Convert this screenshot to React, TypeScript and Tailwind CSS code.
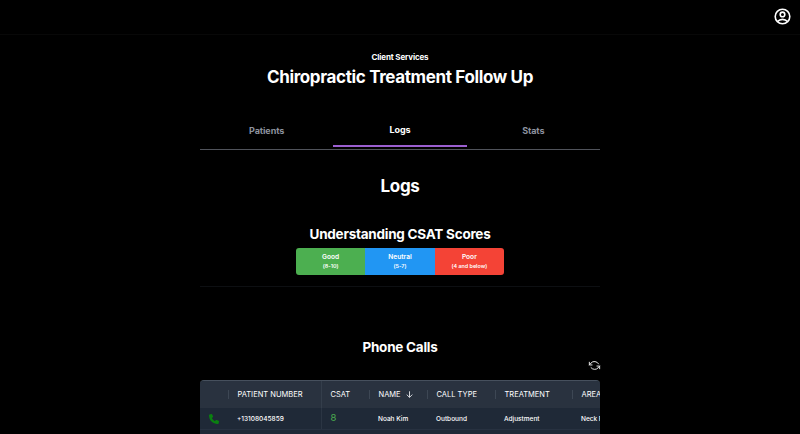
import React from "react";

const columns = [
  { label: "", value: "", width: "w-[28px]" },
  { label: "PATIENT NUMBER", value: "+13108045859", width: "w-[93px]" },
  { label: "CSAT", value: "8", width: "w-[48px]" },
  { label: "NAME", value: "Noah Kim", width: "w-[58px]" },
  { label: "CALL TYPE", value: "Outbound", width: "w-[68px]" },
  { label: "TREATMENT", value: "Adjustment", width: "w-[77px]" },
  { label: "AREA", value: "Neck Pain", width: "w-[80px]" },
];

const scores = [
  { name: "Good", range: "(8-10)", color: "bg-[#4caf50]" },
  { name: "Neutral", range: "(5-7)", color: "bg-[#2196f3]" },
  { name: "Poor", range: "(4 and below)", color: "bg-[#f44336]" },
];

function UserIcon() {
  return (
    <svg className="h-[18px] w-[18px]" viewBox="0 0 18 18" fill="none" stroke="white" strokeWidth="1.6">
      <circle cx="8.5" cy="9.5" r="7.3" />
      <circle cx="8.5" cy="7.4" r="2.3" />
      <path d="M3.6 14.6C4.8 13.1 6.6 12.4 8.5 12.4s3.7.7 4.9 2.2" />
    </svg>
  );
}

function RefreshIcon() {
  return (
    <svg className="h-[13px] w-[13px]" viewBox="0 0 24 24" fill="none" stroke="#e8e8e8" strokeWidth="1.8" strokeLinecap="round" strokeLinejoin="round">
      <path d="M2.5 6v5h5M21.500 18v-5h-5" />
      <path d="M2.500 11l3-3.500a8.500 8.500 0 0 1 14 1.500M21.500 13l-3 3.500a8.500 8.500 0 0 1-13-.5" />
    </svg>
  );
}

export default function App() {
  return (
    <div className="h-[434px] w-[800px] overflow-hidden bg-black font-['Inter',sans-serif] text-white">
      <header className="flex h-[35px] items-start justify-end border-b border-[#080808] pt-[7px] pr-[8px]">
        <UserIcon />
      </header>
      <main className="mx-auto flex w-[400px] flex-col">
        <p className="mt-[17px] text-center text-[8px] leading-[10px] font-bold tracking-[-0.15px]">Client Services</p>
        <h1 className="mt-[5px] text-center text-[17px] leading-[20px] font-bold tracking-[-0.36px] whitespace-nowrap">
          Chiropractic Treatment Follow Up
        </h1>
        <nav className="mt-[27px] grid h-[36px] grid-cols-3 border-b border-[#50535b] text-center text-[9px] leading-[12px] font-bold tracking-[-0.08px]">
          <span className="pt-[11px] text-[#8d929e]">Patients</span>
          <span className="mb-[2px] border-b-2 border-[#9b5fd0] pt-[10px]">Logs</span>
          <span className="pt-[11px] text-[#8d929e]">Stats</span>
        </nav>
        <h2 className="mt-[26px] text-center text-[17px] leading-[20px] font-bold tracking-[-0.36px]">Logs</h2>
        <h3 className="mt-[30px] text-center text-[13.5px] leading-[17px] font-bold tracking-[-0.24px]">
          Understanding CSAT Scores
        </h3>
        <div className="mx-auto mt-[5px] grid h-[27px] w-[208px] grid-cols-3 overflow-hidden rounded-[3px] text-center">
          {scores.map((s) => (
            <div key={s.name} className={`${s.color} pt-[5px]`}>
              <div className="text-[6.6px] leading-[8px] font-semibold">{s.name}</div>
              <div className="mt-[1px] text-[5.4px] leading-[8px] font-semibold">{s.range}</div>
            </div>
          ))}
        </div>
        <div className="mt-[11px] border-t border-[#0d0f12]" />
        <h3 className="mt-[52px] text-center text-[13.5px] leading-[17px] font-bold tracking-[-0.24px]">Phone Calls</h3>
        <div className="-mr-[1px] mt-[3px] flex justify-end">
          <RefreshIcon />
        </div>
        <div className="mt-[8px] h-[60px] overflow-hidden rounded-t-[4px] border-t border-[#46505d] bg-[#1f2937]">
          <div className="flex h-[27px] w-[460px] items-center bg-[#29323f] text-[7.5px]">
            {columns.map((c, i) => (
              <div
                key={i}
                className={`${c.width} ${i === 0 ? "ml-[1px]" : ""} ${i === 1 ? "h-full border-[#343e4b]" : "h-[9px] border-[#3d4754]"} flex shrink-0 items-center border-r pl-[8.5px] whitespace-nowrap`}
              >
                <span className="pt-[1px]">{c.label}</span>
                {c.label === "NAME" && (
                  <svg className="ml-[5px] h-[7px] w-[7px]" viewBox="0 0 7 7" fill="none" stroke="#e5e7eb" strokeWidth="0.9">
                    <path d="M3.5 .3v6M.7 3.6l2.8 2.8 2.8-2.8" />
                  </svg>
                )}
              </div>
            ))}
          </div>
          <div className="flex h-[22px] w-[460px] items-center border-b border-[#273140] text-[6.5px] font-medium">
            {columns.map((c, i) => (
              <div
                key={i}
                className={`${c.width} ${i === 0 ? "ml-[1px]" : ""} ${i === 1 ? "border-r border-[#2b3543]" : ""} flex h-full shrink-0 items-center pl-[8px] whitespace-nowrap`}
              >
                {i === 0 ? (
                  <svg className="h-[10px] w-[10px] shrink-0" viewBox="0 0 512 512" fill="#0a8010">
                    <path d="M164.900 24.600c-7.700-18.600-28-28.500-47.400-23.200l-88 24C12.100 30.200 0 46 0 64c0 247.400 200.600 448 448 448 18 0 33.800-12.100 38.600-29.500l24-88c5.300-19.400-4.600-39.700-23.200-47.400l-96-40c-16.300-6.800-35.200-2.100-46.300 11.600L304.700 368C234.300 334.700 177.300 277.700 144 207.300l49.300-40.300c13.700-11.200 18.400-30 11.600-46.300z" />
                  </svg>
                ) : (
                  <span className={c.label === "CSAT" ? "pl-[0.5px] text-[9.5px] font-normal text-[#4caf50]" : "pt-[2px]"}>{c.value}</span>
                )}
              </div>
            ))}
          </div>
        </div>
      </main>
    </div>
  );
}
